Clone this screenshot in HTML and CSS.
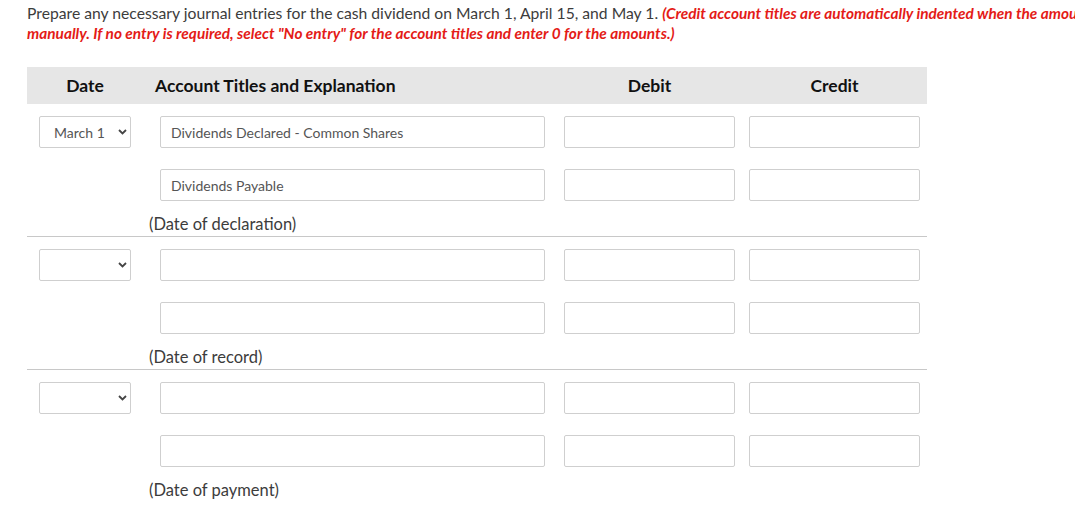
FILE: index.html
```html
<!DOCTYPE html>
<html lang="en">
<head>
    <meta charset="UTF-8">
    <title>Journal Entries - Cash Dividend</title>
    <link rel="stylesheet" href="styles.css">
</head>
<body>
    <p class="instructions">
        Prepare any necessary journal entries for the cash dividend on March 1, April 15, and May 1. <em>(Credit account titles are automatically indented when the amounts are entered</em><br>
        <em>manually. If no entry is required, select "No entry" for the account titles and enter 0 for the amounts.)</em>
    </p>

    <div class="journal">
        <div class="journal-head">
            <div class="col-date">Date</div>
            <div class="col-account">Account Titles and Explanation</div>
            <div class="col-amount">Debit</div>
            <div class="col-amount">Credit</div>
        </div>

        <div class="entry">
            <div class="line">
                <div class="select">
                    <span>March 1</span>
                    <svg width="9" height="6" viewBox="0 0 9 6"><path d="M1 1l3.5 3.5L8 1" fill="none" stroke="#444" stroke-width="1.8"/></svg>
                </div>
                <div class="field">Dividends Declared - Common Shares</div>
                <div class="field"></div>
                <div class="field"></div>
            </div>
            <div class="line">
                <div></div>
                <div class="field">Dividends Payable</div>
                <div class="field"></div>
                <div class="field"></div>
            </div>
            <div class="note">(Date of declaration)</div>
        </div>

        <div class="entry">
            <div class="line">
                <div class="select">
                    <span></span>
                    <svg width="9" height="6" viewBox="0 0 9 6"><path d="M1 1l3.5 3.5L8 1" fill="none" stroke="#444" stroke-width="1.8"/></svg>
                </div>
                <div class="field"></div>
                <div class="field"></div>
                <div class="field"></div>
            </div>
            <div class="line">
                <div></div>
                <div class="field"></div>
                <div class="field"></div>
                <div class="field"></div>
            </div>
            <div class="note">(Date of record)</div>
        </div>

        <div class="entry last">
            <div class="line">
                <div class="select">
                    <span></span>
                    <svg width="9" height="6" viewBox="0 0 9 6"><path d="M1 1l3.5 3.5L8 1" fill="none" stroke="#444" stroke-width="1.8"/></svg>
                </div>
                <div class="field"></div>
                <div class="field"></div>
                <div class="field"></div>
            </div>
            <div class="line">
                <div></div>
                <div class="field"></div>
                <div class="field"></div>
                <div class="field"></div>
            </div>
            <div class="note">(Date of payment)</div>
        </div>
    </div>
</body>
</html>
```

FILE: styles.css
```css
* {
    margin: 0;
    padding: 0;
    box-sizing: border-box;
}

body {
    font-family: Lato, 'Open Sans', Arial, sans-serif;
    background: #fff;
    color: #333;
    padding: 0 27px;
    overflow: hidden;
}

.instructions {
    padding-top: 3px;
    font-size: 15.7px;
    line-height: 20px;
    white-space: nowrap;
    color: #3c3c3c;
}

.instructions em {
    color: #e41b17;
    font-size: 15.4px;
    font-weight: bold;
    font-style: italic;
}

.journal {
    width: 900px;
    margin-top: 24px;
}

.journal-head,
.line {
    display: grid;
    grid-template-columns: 92px 414px 190px 185px;
    padding-left: 12px;
}

.journal-head {
    height: 37px;
    align-items: center;
    background: #e6e6e6;
    font-weight: bold;
    font-size: 17.5px;
    color: #111;
}

.journal-head .col-date {
    text-align: center;
}

.journal-head .col-account {
    padding-left: 24px;
}

.journal-head .col-amount {
    text-align: center;
    padding-left: 19px;
}

.journal-head .col-amount:last-child {
    padding-left: 14px;
}

.entry {
    padding-top: 12px;
    border-bottom: 1px solid #c8c8c8;
}

.entry.last {
    border-bottom: none;
}

.line + .line {
    margin-top: 21px;
}

.line > :nth-child(2) { margin-left: 29px; }
.line > :nth-child(3) { margin-left: 19px; }
.line > :nth-child(4) { margin-left: 14px; }

.select,
.field {
    height: 32px;
    border: 1px solid #cfcfcf;
    border-radius: 2px;
    font-size: 14px;
    color: #555;
    background: #fff;
}

.select {
    display: flex;
    align-items: center;
    justify-content: space-between;
    padding: 0 3px 0 14px;
}

.field {
    display: flex;
    align-items: center;
    padding-left: 10px;
}

.note {
    margin-top: 14px;
    padding: 0 0 2px 122px;
    font-size: 16.5px;
    line-height: 19px;
    color: #3c3c3c;
}
```
